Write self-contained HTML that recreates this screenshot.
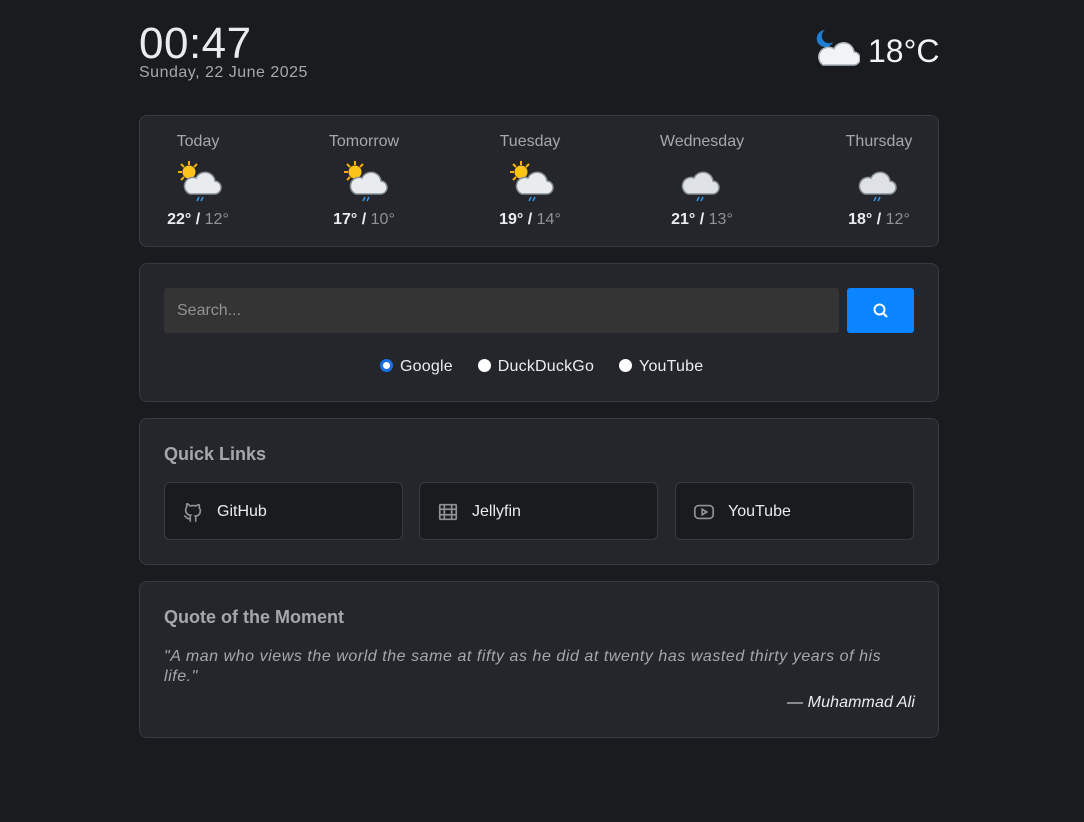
<!DOCTYPE html>
<html><head><style>
*{box-sizing:border-box;margin:0;padding:0}
body{width:1084px;height:822px;background:#1a1b1e;font-family:"Liberation Sans",sans-serif;color:#e9ecef;position:relative;overflow:hidden}
.card{position:absolute;left:139px;width:800px;background:#25262b;border:1px solid #373a40;border-radius:8px}
.day{position:absolute;top:0;width:120px;margin-left:-60px;text-align:center}
.day .n{position:absolute;top:17px;width:100%;font-size:16px;color:#a6a7ab}
.day svg{position:absolute;top:44px;left:38px}
.day .t{position:absolute;top:95px;width:100%;font-size:16px;font-weight:bold;color:#e9ecef}
.day .t span{color:#909296;font-weight:normal}
.link{position:absolute;top:63px;width:239px;height:58px;background:#1a1b1e;border:1px solid #373a40;border-radius:6px;font-size:16px;color:#e9ecef}
.link svg{position:absolute;left:17px;top:18px}
.link span{position:absolute;left:52px;top:20px}
.radio{display:inline-block;width:13px;height:13px;border-radius:50%;background:#fff;vertical-align:-1px;margin-right:7px}
</style></head><body>
<div style="position:absolute;left:139px;top:19px;font-size:44px;color:#e9ecef;letter-spacing:0.5px">00:47</div>
<div style="position:absolute;left:139px;top:64px;font-size:16px;color:#a6a7ab;letter-spacing:0.5px">Sunday, 22 June 2025</div>
<svg style="position:absolute;left:812px;top:28px" width="48" height="40" viewBox="0 0 48 40">
<path d="M13 2a8.5 8.5 0 1 0 8 12a7 7 0 1 1 -8 -12z" fill="#1c7ed6"/>
<path d="M11 37h30a6.5 6.5 0 0 0 1-13a10.5 10.5 0 0 0-20-3a8 8 0 0 0-11 16z" fill="#f1f3f5" stroke="#adb5bd" stroke-width="1.5"/>
</svg>
<div style="position:absolute;left:868px;top:33px;font-size:32px;color:#f1f3f5">18°C</div>

<div class="card" style="top:115px;height:132px">
<div class="day" style="left:58px"><div class="n">Today</div><svg width="46" height="44" viewBox="0 0 46 44"><g stroke="#fab005" stroke-width="2"><line x1="13" y1="1" x2="13" y2="5"/><line x1="2" y1="12" x2="6" y2="12"/><line x1="5" y1="4" x2="8" y2="7"/><line x1="21" y1="4" x2="18" y2="7"/><line x1="5" y1="20" x2="8" y2="17"/></g><circle cx="13" cy="12" r="6.5" fill="#fcc419"/><path d="M14 34h24a6.5 6.5 0 0 0 1-13a10 10 0 0 0-19-3a8 8 0 0 0-6 16z" fill="#e9ecef" stroke="#868e96" stroke-width="1.5"/><path d="M23 37l-2 4M27 37l-2 4" stroke="#339af0" stroke-width="1.5"/></svg><div class="t">22° / <span>12°</span></div></div>
<div class="day" style="left:224px"><div class="n">Tomorrow</div><svg width="46" height="44" viewBox="0 0 46 44"><g stroke="#fab005" stroke-width="2"><line x1="13" y1="1" x2="13" y2="5"/><line x1="2" y1="12" x2="6" y2="12"/><line x1="5" y1="4" x2="8" y2="7"/><line x1="21" y1="4" x2="18" y2="7"/><line x1="5" y1="20" x2="8" y2="17"/></g><circle cx="13" cy="12" r="6.5" fill="#fcc419"/><path d="M14 34h24a6.5 6.5 0 0 0 1-13a10 10 0 0 0-19-3a8 8 0 0 0-6 16z" fill="#e9ecef" stroke="#868e96" stroke-width="1.5"/><path d="M23 37l-2 4M27 37l-2 4" stroke="#339af0" stroke-width="1.5"/></svg><div class="t">17° / <span>10°</span></div></div>
<div class="day" style="left:390px"><div class="n">Tuesday</div><svg width="46" height="44" viewBox="0 0 46 44"><g stroke="#fab005" stroke-width="2"><line x1="13" y1="1" x2="13" y2="5"/><line x1="2" y1="12" x2="6" y2="12"/><line x1="5" y1="4" x2="8" y2="7"/><line x1="21" y1="4" x2="18" y2="7"/><line x1="5" y1="20" x2="8" y2="17"/></g><circle cx="13" cy="12" r="6.5" fill="#fcc419"/><path d="M14 34h24a6.5 6.5 0 0 0 1-13a10 10 0 0 0-19-3a8 8 0 0 0-6 16z" fill="#e9ecef" stroke="#868e96" stroke-width="1.5"/><path d="M23 37l-2 4M27 37l-2 4" stroke="#339af0" stroke-width="1.5"/></svg><div class="t">19° / <span>14°</span></div></div>
<div class="day" style="left:562px"><div class="n">Wednesday</div><svg width="46" height="44" viewBox="0 0 46 44"><path d="M8 34h24a6.5 6.5 0 0 0 1-13a10 10 0 0 0-19-3a8 8 0 0 0-6 16z" fill="#dee2e6" stroke="#868e96" stroke-width="1.5"/><path d="M19 37l-2 4M23 37l-2 4" stroke="#339af0" stroke-width="1.5"/></svg><div class="t">21° / <span>13°</span></div></div>
<div class="day" style="left:739px"><div class="n">Thursday</div><svg width="46" height="44" viewBox="0 0 46 44"><path d="M8 34h24a6.5 6.5 0 0 0 1-13a10 10 0 0 0-19-3a8 8 0 0 0-6 16z" fill="#dee2e6" stroke="#868e96" stroke-width="1.5"/><path d="M19 37l-2 4M23 37l-2 4" stroke="#339af0" stroke-width="1.5"/></svg><div class="t">18° / <span>12°</span></div></div>
</div>

<div class="card" style="top:263px;height:139px">
<div style="position:absolute;left:24px;top:24px;width:675px;height:45px;background:#343434;border-radius:3px;font-size:16px;color:#909296;padding:14px 13px 0">Search...</div>
<div style="position:absolute;left:707px;top:24px;width:67px;height:45px;background:#0a84ff;border-radius:3px">
<svg style="position:absolute;left:25px;top:14px" width="18" height="18" viewBox="0 0 18 18"><circle cx="7.5" cy="7.5" r="5" fill="none" stroke="#fff" stroke-width="2"/><line x1="11" y1="11" x2="15" y2="15" stroke="#fff" stroke-width="2"/></svg></div>
<div style="position:absolute;left:240px;top:94px;font-size:16px;color:#e9ecef;white-space:nowrap;letter-spacing:0.2px">
<span class="radio" style="border:3px solid #1971e6;background:#fff"></span>Google<span style="display:inline-block;width:25px"></span><span class="radio"></span>DuckDuckGo<span style="display:inline-block;width:25px"></span><span class="radio"></span>YouTube</div>
</div>

<div class="card" style="top:418px;height:147px">
<div style="position:absolute;left:24px;top:25px;font-size:18px;font-weight:bold;color:#a6a7ab">Quick Links</div>
<div class="link" style="left:24px"><svg width="22" height="22" viewBox="0 0 24 24" fill="none" stroke="#909296" stroke-width="1.8" stroke-linecap="round"><path d="M9 19c-4 1.5-4-2-6-2.5M15 22v-3.5c0-1 .1-1.4-.5-2 2.8-.3 5.5-1.4 5.5-6a4.6 4.6 0 0 0-1.3-3.2 4.2 4.2 0 0 0-.1-3.2s-1.1-.3-3.5 1.3a12 12 0 0 0-6.2 0C6.5 2.8 5.4 3.1 5.4 3.1a4.2 4.2 0 0 0-.1 3.2A4.6 4.6 0 0 0 4 9.5c0 4.6 2.7 5.7 5.5 6-.6.6-.6 1.2-.5 2V22"/></svg><span>GitHub</span></div>
<div class="link" style="left:279px"><svg width="22" height="22" viewBox="0 0 24 24" fill="none" stroke="#909296" stroke-width="1.8"><rect x="3" y="4" width="18" height="16" rx="1"/><path d="M3 9h18M3 15h18M8 4v16M16 4v16"/></svg><span>Jellyfin</span></div>
<div class="link" style="left:535px"><svg width="22" height="22" viewBox="0 0 24 24" fill="none" stroke="#909296" stroke-width="1.8"><rect x="2" y="5" width="20" height="14" rx="4"/><path d="M10 9l5 3-5 3z"/></svg><span>YouTube</span></div>
</div>

<div class="card" style="top:581px;height:157px">
<div style="position:absolute;left:24px;top:25px;font-size:18px;font-weight:bold;color:#a6a7ab">Quote of the Moment</div>
<div style="position:absolute;left:24px;top:65px;width:760px;font-size:16px;font-style:italic;color:#a6a7ab;line-height:20px;letter-spacing:0.55px">"A man who views the world the same at fifty as he did at twenty has wasted thirty years of his<br>life."</div>
<div style="position:absolute;right:23px;top:112px;font-size:16px;font-style:italic;color:#e9ecef;letter-spacing:0.1px">— Muhammad Ali</div>
</div>
</body></html>
